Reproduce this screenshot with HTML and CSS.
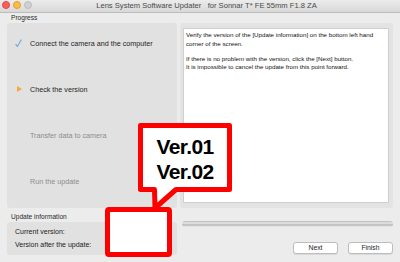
FILE: index.html
```html
<!DOCTYPE html>
<html lang="en">
<head>
    <meta charset="UTF-8">
    <title>Lens System Software Updater</title>
    <link rel="stylesheet" href="styles.css">
</head>
<body>
    <div class="window">
        <div class="titlebar">
            <div class="lights">
                <span class="light red"></span>
                <span class="light yellow"></span>
                <span class="light off"></span>
            </div>
            <div class="title">Lens System Software Updater&nbsp;&nbsp;&nbsp;for Sonnar T* FE 55mm F1.8 ZA</div>
        </div>

        <div class="label">Progress</div>
        <div class="top">
            <!-- steps list -->
            <div class="steps">
                <div class="step done">
                    <span class="step-icon">
                        <svg width="7" height="8" viewBox="0 0 7 8"><path d="M0.6 5.2 L2.4 7.4 L6.4 0.4" fill="none" stroke="#6ea8d6" stroke-width="1.1"/></svg>
                    </span>
                    Connect the camera and the computer
                </div>
                <div class="step current">
                    <span class="step-icon">
                        <svg width="5" height="6" viewBox="0 0 5 6"><polygon points="0,0 5,3 0,6" fill="#f2aa3c"/></svg>
                    </span>
                    Check the version
                </div>
                <div class="step todo"><span class="step-icon"></span>Transfer data to camera</div>
                <div class="step todo"><span class="step-icon"></span>Run the update</div>
            </div>
            <!-- message -->
            <div class="info-panel">
                <div class="message">
                    <p>Verify the version of the [Update information] on the bottom left hand corner of the screen.</p>
                    <p>If there is no problem with the version, click the [Next] button.<br>It is impossible to cancel the update from this point forward.</p>
                </div>
            </div>
        </div>

        <div class="bottom">
            <div class="update-col">
                <div class="label inner">Update information</div>
                <div class="versions">
                    <div class="version-row">Current version:</div>
                    <div class="version-row">Version after the update:</div>
                </div>
            </div>
            <div class="action-col">
                <div class="progress"></div>
                <div class="buttons">
                    <button class="btn">Next</button>
                    <button class="btn">Finish</button>
                </div>
            </div>
        </div>
    </div>

    <!-- red callout laid over the window -->
    <svg class="callout-shape" width="400" height="262" viewBox="0 0 400 262">
        <path d="M140.5 125.5 H229.5 V189.5 H176 L155 208 L154.5 189.5 H140.5 Z" fill="#fff" stroke="#f00" stroke-width="5" stroke-linejoin="round"/>
        <rect x="107.5" y="209.5" width="62" height="45" fill="#fff" stroke="#f00" stroke-width="5" rx="1.5"/>
    </svg>
    <div class="callout-text">Ver.01<br>Ver.02</div>
</body>
</html>
```

FILE: styles.css
```css
body{
    margin: 0;
    width: 400px;
    height: 262px;
    overflow: hidden;
    position: relative;
    background-color: #ececec;
    font-family: "Liberation Sans", Arial, sans-serif;
    color: #1e1e1e;
}
.window{
    height: 262px;
}
.titlebar{
    height: 12px;
    background: linear-gradient(#ececec, #d8d8d8);
    border-bottom: 1px solid #bcbcbc;
    display: flex;
    align-items: center;
    position: relative;
}
.lights{
    display: flex;
    gap: 3px;
    padding-left: 2px;
    margin-top: -2px;
}
.light{
    width: 8px;
    height: 8px;
    border-radius: 50%;
    box-sizing: border-box;
}
.light.red{
    background-color: #fc605b;
    border: 1px solid #de4a45;
}
.light.yellow{
    background-color: #fdbc40;
    border: 1px solid #dea236;
}
.light.off{
    background-color: #d0d0d0;
    border: 1px solid #bdbdbd;
}
.title{
    flex: 1;
    text-align: center;
    font-size: 7.6px;
    color: #4a4a4a;
    margin-left: -24px;
    margin-top: -1px;
    padding-left: 5px;
}
.label{
    font-size: 6.6px;
    color: #2a2a2a;
    height: 10px;
    line-height: 10px;
    padding-left: 11px;
}
.label.inner{
    padding-left: 4px;
    margin-top: 4px;
    height: 9px;
    line-height: 9px;
}
.top{
    display: flex;
    gap: 3px;
    padding: 0 7px;
    height: 185px;
}
.steps{
    width: 170px;
    background-color: #e1e1e1;
    border-radius: 3px;
    display: flex;
    flex-direction: column;
    gap: 36px;
    padding-top: 15px;
    box-sizing: border-box;
}
.step{
    display: flex;
    align-items: center;
    height: 10px;
    font-size: 7.2px;
    padding-left: 8px;
}
.step-icon{
    width: 15px;
    display: flex;
    align-items: center;
}
.step.current .step-icon{
    padding-left: 2px;
    width: 13px;
}
.step.todo{
    color: #8c8c8c;
}
.info-panel{
    flex: 1;
    background-color: #e3e3e3;
    border-radius: 3px;
    padding: 5px 4px 5px 3px;
}
.message{
    height: 100%;
    box-sizing: border-box;
    background-color: #fff;
    border: 1px solid #cfcfcf;
    padding: 2px 2px;
    font-size: 6.2px;
    line-height: 8.8px;
    color: #111;
}
.message p{
    margin: 0 0 6px;
}
.bottom{
    display: grid;
    grid-template-columns: 170px 1fr;
    gap: 3px;
    padding: 0 7px;
}
.versions{
    margin-top: 1px;
    height: 33px;
    background-color: #e1e1e1;
    border-radius: 3px;
    padding: 4px 0 0 8px;
    box-sizing: border-box;
}
.version-row{
    font-size: 7px;
    height: 13px;
    line-height: 12px;
    color: #222;
}
.action-col{
    padding: 13px 0 0 2px;
}
.progress{
    height: 6px;
    border-radius: 3px;
    background: linear-gradient(#c2c2c2 0 1px, #dcdcdc 1px 3px, #c4c4c4 3px 5px, #e4e4e4 5px);
}
.buttons{
    display: flex;
    justify-content: flex-end;
    gap: 10px;
    margin-top: 15px;
}
.btn{
    width: 45px;
    height: 12px;
    padding: 0;
    background-color: #fff;
    border: 1px solid #bdbdbd;
    border-radius: 3px;
    box-shadow: 0 1px 0 rgba(0, 0, 0, 0.08);
    font-family: "Liberation Sans", Arial, sans-serif;
    font-size: 6.8px;
    color: #222;
    line-height: 10px;
}
.callout-shape{
    position: absolute;
    left: 0;
    top: 0;
}
.callout-text{
    position: absolute;
    left: 143px;
    top: 134px;
    width: 84px;
    text-align: center;
    font-weight: 700;
    font-size: 21px;
    line-height: 25px;
    letter-spacing: -0.6px;
    color: #000;
}
```
